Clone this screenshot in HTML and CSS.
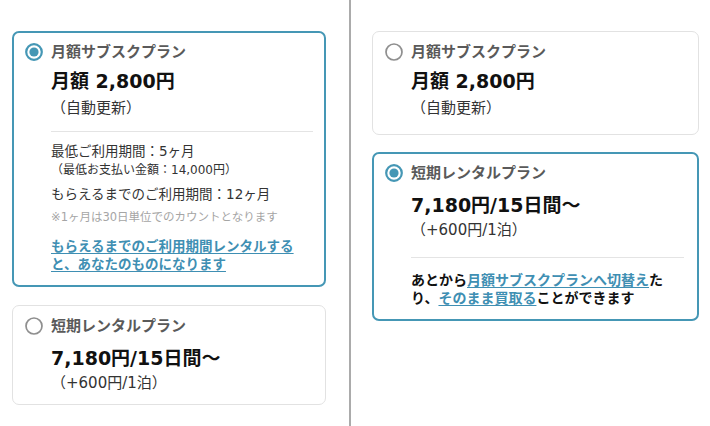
FILE: index.html
```html
<!DOCTYPE html>
<html lang="ja">
<head>
<meta charset="utf-8">
<title>プラン選択</title>
<link rel="stylesheet" href="styles.css">
</head>
<body>
<div class="page">
  <section class="col col-left">
    <div class="card is-selected">
      <div class="card-head">
        <svg class="radio radio-on" viewBox="0 0 18 18"><circle class="ring" cx="9" cy="9" r="7.8"/><circle class="dot" cx="9" cy="9" r="4.6"/></svg>
        <span class="plan-title">月額サブスクプラン</span>
      </div>
      <div class="card-body">
        <div class="price">月額 2,800円</div>
        <div class="price-note">（自動更新）</div>
        <hr class="rule rule-sub">
        <p class="term">最低ご利用期間：5ヶ月</p>
        <p class="term-sub">（最低お支払い金額：14,000円）</p>
        <p class="term term-own">もらえるまでのご利用期間：12ヶ月</p>
        <p class="note">※1ヶ月は30日単位でのカウントとなります</p>
        <p class="own-link"><a class="link" href="#">もらえるまでのご利用期間レンタルする<br>と、あなたのものになります</a></p>
      </div>
    </div>
    <div class="card card-rental-left">
      <div class="card-head">
        <svg class="radio radio-off" viewBox="0 0 18 18"><circle class="ring" cx="9" cy="9" r="8"/></svg>
        <span class="plan-title">短期レンタルプラン</span>
      </div>
      <div class="card-body">
        <div class="price price-rental">7,180円/15日間〜</div>
        <div class="price-note">（+600円/1泊）</div>
      </div>
    </div>
  </section>
  <div class="divider"></div>
  <section class="col col-right">
    <div class="card card-sub-right">
      <div class="card-head">
        <svg class="radio radio-off" viewBox="0 0 18 18"><circle class="ring" cx="9" cy="9" r="8"/></svg>
        <span class="plan-title">月額サブスクプラン</span>
      </div>
      <div class="card-body">
        <div class="price">月額 2,800円</div>
        <div class="price-note">（自動更新）</div>
      </div>
    </div>
    <div class="card is-selected card-rental-right">
      <div class="card-head">
        <svg class="radio radio-on" viewBox="0 0 18 18"><circle class="ring" cx="9" cy="9" r="7.8"/><circle class="dot" cx="9" cy="9" r="4.6"/></svg>
        <span class="plan-title">短期レンタルプラン</span>
      </div>
      <div class="card-body">
        <div class="price price-rental">7,180円/15日間〜</div>
        <div class="price-note">（+600円/1泊）</div>
        <hr class="rule rule-rental">
        <p class="switch-text">あとから<a class="link" href="#">月額サブスクプランへ切替え</a>た<br>り、<a class="link" href="#">そのまま買取る</a>ことができます</p>
      </div>
    </div>
  </section>
</div>
</body>
</html>
```
FILE: styles.css
```css
* {
  box-sizing: border-box;
  margin: 0;
  padding: 0;
}

body {
  font-family: "DejaVu Sans", "Noto Sans CJK JP", sans-serif;
  color: #222;
  background: #fff;
}

.page {
  display: flex;
  height: 426px;
}

.col {
  display: flex;
  flex-direction: column;
  align-items: stretch;
}

.col-left {
  width: 349px;
  padding: 31px 23px 0 12px;
  gap: 18px;
}

.divider {
  width: 2px;
  background: #ababab;
}

.col-right {
  flex: 1;
  padding: 31px 11px 0 21px;
  gap: 17px;
}

.card {
  border: 1px solid #e2e2e2;
  border-radius: 7px;
  padding: 10px 12px 17px 12px;
  background: #fff;
}

.card.is-selected {
  border: 2px solid #4597b5;
  padding: 9px 11px 12px 11px;
}

.card-rental-left {
  padding-bottom: 12px;
}

.card-rental-right {
  padding-bottom: 13px;
}

.card-head {
  display: flex;
  align-items: center;
  gap: 8px;
  height: 20px;
}

.radio {
  width: 18px;
  height: 18px;
  flex: none;
}

.radio-on .ring {
  fill: #fff;
  stroke: #4597b5;
  stroke-width: 2.2;
}

.radio-on .dot {
  fill: #4597b5;
}

.radio-off .ring {
  fill: #fff;
  stroke: #8f8f8f;
  stroke-width: 1.7;
}

.plan-title {
  font-size: 15px;
  font-weight: 700;
  color: #5a5a5a;
  line-height: 20px;
}

.card-body {
  padding-left: 26px;
}

.price {
  font-size: 19px;
  font-weight: 700;
  color: #111;
  line-height: 36px;
  margin-top: 1px;
}

.price-rental {
  line-height: 32px;
  margin-top: 6px;
}

.price-note {
  font-size: 15px;
  line-height: 18px;
  color: #333;
}

.rule {
  border: 0;
  border-top: 1px solid #e4e4e4;
}

.rule-sub {
  margin-top: 14px;
}

.rule-rental {
  margin-top: 18px;
  margin-right: 2px;
}

.term {
  font-size: 13.5px;
  line-height: 20px;
  color: #333;
  margin-top: 9px;
}

.term-sub {
  font-size: 12px;
  line-height: 18px;
  color: #333;
}

.term-own {
  margin-top: 5px;
}

.note {
  font-size: 11.5px;
  line-height: 18px;
  color: #a5a5a5;
  margin-top: 4px;
}

.own-link {
  margin-top: 11px;
  font-size: 13.5px;
  line-height: 18px;
  font-weight: 700;
}

.link {
  color: #3f8fb3;
  text-decoration: underline;
  text-underline-offset: 2px;
}

.switch-text {
  margin-top: 13px;
  font-size: 14px;
  line-height: 18px;
  font-weight: 700;
  color: #111;
}
```
